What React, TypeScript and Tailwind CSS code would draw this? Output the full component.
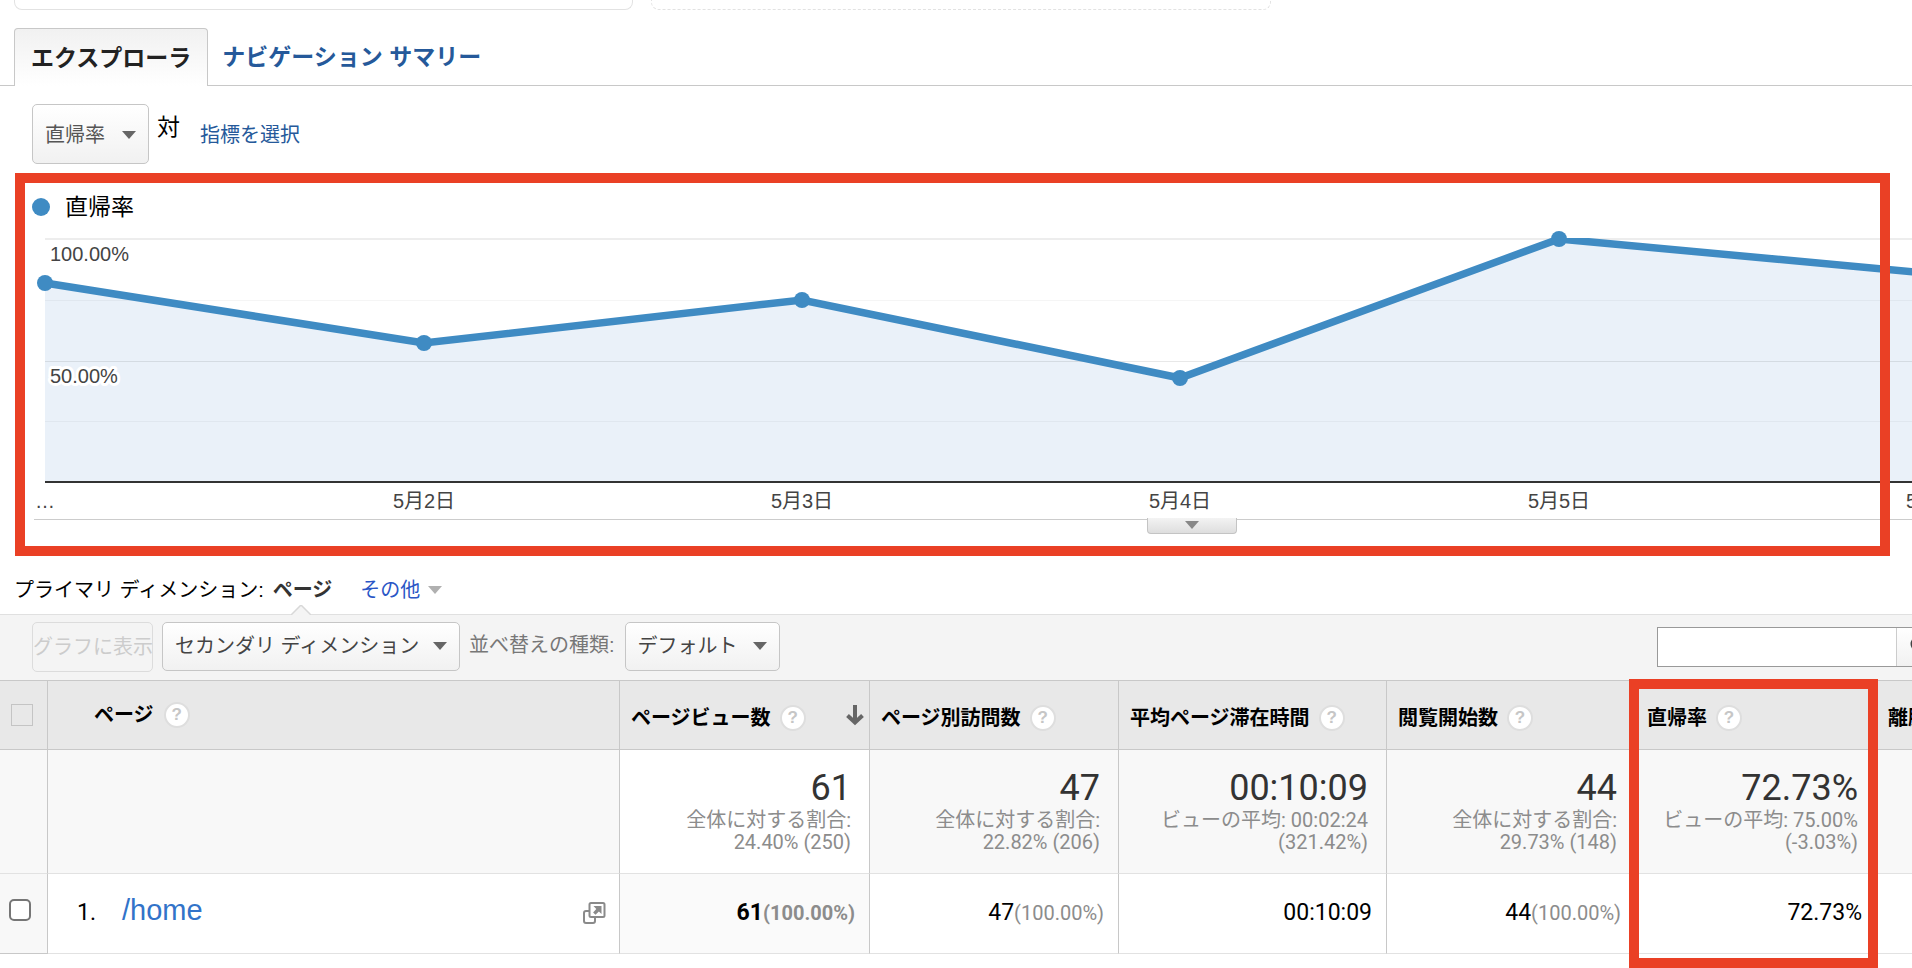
import React from "react";

const JP = "font-['Liberation_Sans','Noto_Sans_CJK_JP',sans-serif]";
const RB = "font-['Roboto','Noto_Sans_CJK_JP',sans-serif]";

function Caret({ className = "text-[#666]" }: { className?: string }) {
  return (
    <svg className={"h-2 w-3.5 shrink-0 " + className} viewBox="0 0 14 8" aria-hidden="true">
      <path d="M0 0h14L7 8z" fill="currentColor" />
    </svg>
  );
}

function Help() {
  return (
    <button
      type="button"
      aria-label="ヘルプ"
      className="flex size-[26px] shrink-0 items-center justify-center rounded-full border-2 border-[#dedede] bg-white font-['Liberation_Sans',sans-serif] text-[17px] font-bold text-[#c6c6c6]"
    >
      ?
    </button>
  );
}

const points = [
  { x: 45, y: 54, label: "…" },
  { x: 424, y: 114, label: "5月2日" },
  { x: 802, y: 71, label: "5月3日" },
  { x: 1180, y: 149, label: "5月4日" },
  { x: 1559, y: 10, label: "5月5日" },
  { x: 1937, y: 45, label: "5月6日" },
];
const linePath = points.map((p, i) => (i ? "L" : "M") + p.x + " " + p.y).join(" ");

function Chart() {
  return (
    <svg className="block h-[292px] w-full" role="img" aria-label="直帰率の推移">
      <defs>
        <clipPath id="plot">
          <rect x="0" y="9" width="4000" height="250" />
        </clipPath>
      </defs>
      <path d={linePath + " L1937 253 L45 253 Z"} fill="#eaf1f9" />
      <g fill="#000">
        <rect x="45" y="9" width="4000" height="2" opacity="0.07" />
        <rect x="45" y="71" width="4000" height="1" opacity="0.04" />
        <rect x="45" y="132" width="4000" height="1" opacity="0.09" />
        <rect x="45" y="192" width="4000" height="1" opacity="0.04" />
      </g>
      <rect x="45" y="252" width="4000" height="2" fill="#333" />
      <path d={linePath} fill="none" stroke="#3f8bc3" strokeWidth="7.5" clipPath="url(#plot)" />
      {points.map((p) => (
        <circle key={p.label} cx={p.x} cy={p.y} r="8" fill="#3f8bc3" />
      ))}
      <g className={JP + " text-xl"} fill="#444">
        <text x="50" y="32">100.00%</text>
        <text x="50" y="154" stroke="#fff" strokeWidth="6" strokeLinejoin="round" paintOrder="stroke">
          50.00%
        </text>
        {points.map((p) => (
          <text key={p.label} x={p.x} y="279" textAnchor="middle">
            {p.label}
          </text>
        ))}
      </g>
      <rect x="34" y="290" width="4000" height="1" fill="#ccc" />
    </svg>
  );
}

const columns = [
  { name: "ページビュー数", total: "61", sub: ["全体に対する割合:", "24.40% (250)"], value: "61", pct: "(100.00%)", sorted: true },
  { name: "ページ別訪問数", total: "47", sub: ["全体に対する割合:", "22.82% (206)"], value: "47", pct: "(100.00%)" },
  { name: "平均ページ滞在時間", total: "00:10:09", sub: ["ビューの平均: 00:02:24", "(321.42%)"], value: "00:10:09", pct: "" },
  { name: "閲覧開始数", total: "44", sub: ["全体に対する割合:", "29.73% (148)"], value: "44", pct: "(100.00%)" },
  { name: "直帰率", total: "72.73%", sub: ["ビューの平均: 75.00%", "(-3.03%)"], value: "72.73%", pct: "" },
];

function DataTable() {
  return (
    <table className={RB + " w-full table-fixed border-separate border-spacing-0"}>
      <colgroup>
        <col className="w-12" />
        <col className="w-[572px]" />
        <col className="w-[250px]" />
        <col className="w-[249px]" />
        <col className="w-[268px]" />
        <col className="w-[249px]" />
        <col className="w-[241px]" />
        <col />
      </colgroup>
      <thead>
        <tr className="h-[69px] bg-[#e8e8e8] text-left text-xl font-bold text-black">
          <th className="border-b border-r border-[#c8c8c8] pl-[11px] font-bold">
            <input type="checkbox" disabled aria-label="すべての行" className="block size-[22px] appearance-none border border-[#c4c4c4]" />
          </th>
          <th className="border-b border-r border-[#c8c8c8] pl-[46px]">
            <div className="flex items-center gap-2.5">
              ページ
              <Help />
            </div>
          </th>
          {columns.map((c) => (
            <th key={c.name} className="border-b border-r border-[#c8c8c8] pl-[11px] pr-1 pt-1.5">
              <div className="flex items-center gap-[9px] whitespace-nowrap">
                {c.name}
                <Help />
                {c.sorted && (
                  <svg className="mb-1.5 ml-auto h-[22px] w-5" viewBox="0 0 20 22" aria-label="降順">
                    <path d="M10 1v18M2.500 11.500L10 18.500l7.500-7" fill="none" stroke="#666" strokeWidth="4" />
                  </svg>
                )}
              </div>
            </th>
          ))}
          <th className="overflow-hidden whitespace-nowrap border-b border-[#c8c8c8] pl-[11px] pt-1.5">離脱率</th>
        </tr>
      </thead>
      <tbody>
        <tr className="h-[124px] bg-[#f8f8f8]">
          <td className="border-b border-r border-b-[#e2e2e2] border-r-[#c8c8c8]" />
          <td className="border-b border-r border-b-[#e2e2e2] border-r-[#c8c8c8]" />
          {columns.map((c) => (
            <td
              key={c.name}
              className={
                "border-b border-r border-b-[#e2e2e2] border-r-[#c8c8c8] pr-[18px] pt-[17px] text-right align-top text-xl leading-[22px] text-[#8c8c8c] " +
                (c.sorted ? "bg-white" : "")
              }
            >
              <div className="text-4xl leading-[42px] text-[#333]">{c.total}</div>
              <div className="whitespace-nowrap">{c.sub[0]}</div>
              <div className="whitespace-nowrap">{c.sub[1]}</div>
            </td>
          ))}
          <td className="border-b border-b-[#e2e2e2]" />
        </tr>
        <tr className="h-20 bg-white">
          <td className="border-b border-r border-[#c8c8c8] bg-[#f8f8f8] pb-2 pl-[9px]">
            <input type="checkbox" aria-label="/home を選択" className="block size-[22px] appearance-none rounded-[5px] border-2 border-[#767676] bg-white" />
          </td>
          <td className="border-b border-r border-b-[#e2e2e2] border-r-[#c8c8c8] pl-[29px] pr-[13px]">
            <div className="flex items-baseline pb-0.5">
              <span className="text-[23px] text-black">1.</span>
              <a href="#home" className="ml-[26px] font-['Liberation_Sans',sans-serif] text-[29px] leading-8 text-[#3273c9]">
                /home
              </a>
              <a href="#open" aria-label="ページを開く" className="ml-auto self-center">
                <svg className="h-6 w-6" viewBox="0 0 24 24" fill="none" stroke="#8a8a8a" strokeWidth="2">
                  <rect x="2" y="10" width="11" height="12" rx="2" />
                  <rect x="7.500" y="2" width="15" height="14" rx="1.500" fill="#fff" />
                  <path d="M11.500 5h8v8l-2.600-2.400-3.400 3.200-2.400-2.300 3.200-3.400z" fill="#8a8a8a" stroke="none" />
                </svg>
              </a>
            </div>
          </td>
          {columns.map((c) => (
            <td
              key={c.name}
              className={
                "whitespace-nowrap border-b border-r border-b-[#e2e2e2] border-r-[#c8c8c8] pr-3.5 text-right text-[23px] text-black " +
                (c.sorted ? "bg-[#fafafa] font-bold" : "")
              }
            >
              {c.value}
              <span className="text-xl text-[#8c8c8c]">{c.pct}</span>
            </td>
          ))}
          <td className="border-b border-b-[#e2e2e2]" />
        </tr>
      </tbody>
    </table>
  );
}

const menuButton = "flex items-center border border-[#c6c6c6] rounded-[5px] bg-linear-to-b from-white to-[#f1f1f1] text-xl text-[#444]";

export default function App() {
  return (
    <div className={JP + " relative min-h-screen overflow-hidden bg-white text-black"}>
      <div className="flex h-2.5 gap-[18px] pl-3.5">
        <div className="w-[619px] rounded-b-lg border border-t-0 border-[#e2e2e2]" />
        <div className="w-[620px] rounded-b-lg border border-t-0 border-dashed border-[#e2e2e2]" />
      </div>

      <nav className="mt-[18px] flex h-[58px] items-stretch border-b border-[#c8c8c8] pl-3.5 text-[23px] font-bold">
        <a href="#explorer" className="-mb-px flex items-center rounded-t border border-b-0 border-[#c8c8c8] bg-linear-to-b from-[#f1f1f1] to-white px-4 pt-0.5 text-[#222]">
          エクスプローラ
        </a>
        <a href="#summary" className="flex items-center pl-3.5 pt-0.5 text-[#25599a]">
          ナビゲーション サマリー
        </a>
      </nav>

      <div className="flex h-[87px] items-start pl-8 pt-[18px]">
        <button type="button" className={menuButton + " h-[60px] w-[117px] justify-between px-3 pt-0.5 text-[#555]"}>
          直帰率
          <Caret />
        </button>
        <span className="ml-2 mt-[7px] text-[23px] leading-8">対</span>
        <a href="#metric" className="ml-5 mt-[15px] text-xl leading-8 text-[#25599a]">
          指標を選択
        </a>
      </div>

      <section className="relative">
        <div className="flex h-14 items-center gap-[15px] pl-8 pt-3 text-[23px] leading-8">
          <span className="size-[18px] rounded-full bg-[#3f8bc3]" />
          直帰率
        </div>
        <Chart />
        <button
          type="button"
          aria-label="グラフを切り替え"
          className="absolute left-[1147px] top-[345px] flex h-4 w-[90px] items-start justify-center rounded-b border border-t-0 border-[#c4c4c4] bg-linear-to-b from-[#f3f3f3] to-[#dedede] pt-[3px]"
        >
          <Caret className="text-[#888]" />
        </button>
        <div className="pointer-events-none absolute left-[15px] right-[22px] top-0 h-[383px] border-10 border-[#ea4025]" />
      </section>

      <div className="mt-[51px] flex h-[42px] items-center pb-1.5 pl-3.5 text-xl">
        <span>プライマリ ディメンション:</span>
        <a href="#page" className="relative ml-[9px] font-bold text-[#333]">
          ページ
          <svg className="absolute -bottom-[11px] left-4.5 h-2.5 w-5" viewBox="0 0 20 10" aria-hidden="true">
            <path d="M0 10L10 0l10 10" fill="#f4f4f4" stroke="#d8d8d8" strokeWidth="1.5" />
          </svg>
        </a>
        <a href="#other" className="ml-7 flex items-center gap-2 text-[#2a56c6]">
          その他
          <Caret className="text-[#b0b0b0]" />
        </a>
      </div>

      <div className="flex h-[66px] items-start border-t border-[#e0e0e0] bg-[#f4f4f4] pl-8 pt-[7px] text-xl">
        <button type="button" disabled className="h-[50px] w-[121px] whitespace-nowrap rounded-[5px] border border-[#dcdcdc] text-[#ccc]">
          グラフに表示
        </button>
        <button type="button" className={menuButton + " ml-[9px] h-[49px] w-[298px] justify-between px-3 pb-0.5"}>
          セカンダリ ディメンション
          <Caret />
        </button>
        <span className="ml-[9px] leading-[46px] text-[#777]">並べ替えの種類:</span>
        <button type="button" className={menuButton + " ml-2.5 h-[49px] w-[155px] justify-between px-3 pb-0.5"}>
          デフォルト
          <Caret />
        </button>
        <div className="ml-auto mt-[5px] flex h-10 w-[255px] overflow-hidden border border-r-0 border-[#999] bg-white">
          <input type="text" aria-label="検索" className="min-w-0 flex-1 bg-white px-2 outline-none" />
          <button
            type="button"
            aria-label="検索する"
            className="flex w-4 items-center overflow-hidden border-l border-[#ccc] bg-linear-to-b from-white to-[#f1f1f1] pb-1 pl-[13px]"
          >
            <svg className="h-5 w-5 shrink-0" viewBox="0 0 20 20" fill="none" stroke="#444" strokeWidth="3" aria-hidden="true">
              <circle cx="8" cy="9" r="6" />
              <path d="M13 14l5 5" />
            </svg>
          </button>
        </div>
      </div>

      <div className="relative border-t border-[#c8c8c8]">
        <DataTable />
        <div className="pointer-events-none absolute -top-0.5 left-[1629px] h-[289px] w-[249px] border-10 border-[#ea4025]" />
      </div>
    </div>
  );
}
